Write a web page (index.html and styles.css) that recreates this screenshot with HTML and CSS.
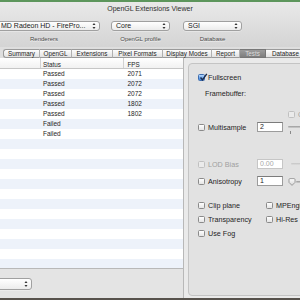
FILE: index.html
```html
<!DOCTYPE html>
<html>
<head>
<meta charset="utf-8">
<title>OpenGL Extensions Viewer</title>
<link rel="stylesheet" href="styles.css">
</head>
<body>
<div class="window">
  <div class="accent"></div>
  <header class="toolbar">
    <div class="title">OpenGL Extensions Viewer</div>
    <div class="pickers">
      <div class="picker renderers">
        <div class="popup"><span>MD Radeon HD - FirePro...</span><svg class="arr" viewBox="0 0 4 8" width="4" height="8"><path d="M0.5 3 L2 1 L3.5 3 Z M0.5 5 L2 7 L3.5 5 Z" fill="#333"/></svg></div>
        <div class="plabel">Renderers</div>
      </div>
      <div class="picker profile">
        <div class="popup"><span>Core</span><svg class="arr" viewBox="0 0 4 8" width="4" height="8"><path d="M0.5 3 L2 1 L3.5 3 Z M0.5 5 L2 7 L3.5 5 Z" fill="#333"/></svg></div>
        <div class="plabel">OpenGL profile</div>
      </div>
      <div class="picker database">
        <div class="popup"><span>SGI</span><svg class="arr" viewBox="0 0 4 8" width="4" height="8"><path d="M0.5 3 L2 1 L3.5 3 Z M0.5 5 L2 7 L3.5 5 Z" fill="#333"/></svg></div>
        <div class="plabel">Database</div>
      </div>
    </div>
  </header>
  <nav class="tabs">
    <div class="tab first t-summary">Summary</div>
    <div class="tab t-opengl">OpenGL</div>
    <div class="tab t-ext">Extensions</div>
    <div class="tab t-pixel">Pixel Formats</div>
    <div class="tab t-display">Display Modes</div>
    <div class="tab t-report">Report</div>
    <div class="tab sel t-tests">Tests</div>
    <div class="tab t-db">Database</div>
  </nav>
  <main class="content">
    <section class="left">
      <div class="table">
        <div class="thead"><div class="c c1"></div><div class="c c2">Status</div><div class="c c3">FPS</div></div>
        <div class="row"><div class="c c1"></div><div class="c c2">Passed</div><div class="c c3">2071</div></div>
        <div class="row"><div class="c c1"></div><div class="c c2">Passed</div><div class="c c3">2072</div></div>
        <div class="row"><div class="c c1"></div><div class="c c2">Passed</div><div class="c c3">2072</div></div>
        <div class="row"><div class="c c1"></div><div class="c c2">Passed</div><div class="c c3">1802</div></div>
        <div class="row"><div class="c c1"></div><div class="c c2">Passed</div><div class="c c3">1802</div></div>
        <div class="row"><div class="c c1"></div><div class="c c2">Failed</div><div class="c c3"></div></div>
        <div class="row"><div class="c c1"></div><div class="c c2">Failed</div><div class="c c3"></div></div>
        <div class="row"></div><div class="row"></div><div class="row"></div><div class="row"></div>
        <div class="row"></div><div class="row"></div><div class="row"></div><div class="row"></div>
        <div class="row"></div><div class="row"></div><div class="row"></div><div class="row"></div>
        <div class="row"></div>
      </div>
      <div class="bottombar">
        <div class="popup small"><span></span><svg class="arr" viewBox="0 0 4 8" width="4" height="8"><path d="M0.5 3 L2 1 L3.5 3 Z M0.5 5 L2 7 L3.5 5 Z" fill="#333"/></svg></div>
      </div>
    </section>
    <section class="right">
      <div class="box">
        <div class="r r-full">
          <span class="cb on"><svg viewBox="0 0 9 9" width="9" height="9"><path d="M1.5 4.5 L3.5 6.8 L7.8 0.8" fill="none" stroke="#1b2b4a" stroke-width="1.4"/></svg></span>
          <span class="lbl">Fullscreen</span>
        </div>
        <div class="r r-fb"><span>Framebuffer:</span></div>
        <div class="r r-opt"><span class="cb dis"></span><span class="lbl dim">C</span></div>
        <div class="r r-ms">
          <span class="cb"></span><span class="lbl wide">Multisample</span>
          <span class="field">2</span>
          <span class="slider ms"><span class="track"></span><span class="tick"></span></span>
        </div>
        <div class="r r-lod">
          <span class="cb dis"></span><span class="lbl wide dim">LOD Bias</span>
          <span class="field dis">0.00</span>
          <span class="slider lod"><span class="track light"></span></span>
        </div>
        <div class="r r-aniso">
          <span class="cb"></span><span class="lbl wide">Anisotropy</span>
          <span class="field">1</span>
          <span class="knobwrap"><svg class="knob" viewBox="0 0 8 8" width="8" height="8"><defs><linearGradient id="kg" x1="0" y1="0" x2="0" y2="1"><stop offset="0" stop-color="#ffffff"/><stop offset="1" stop-color="#d4d4d4"/></linearGradient></defs><path d="M1 1.6 Q1 0.6 2 0.6 H6 Q7 0.6 7 1.6 V4.4 L4 7.4 L1 4.4 Z" fill="url(#kg)" stroke="#8a8a8a" stroke-width="0.8"/></svg><span class="track short"></span></span>
        </div>
        <div class="r r-clip">
          <span class="pair"><span class="cb"></span><span class="lbl">Clip plane</span></span>
          <span class="pair"><span class="cb"></span><span class="lbl">MPEngine</span></span>
        </div>
        <div class="r r-trans">
          <span class="pair"><span class="cb"></span><span class="lbl">Transparency</span></span>
          <span class="pair"><span class="cb"></span><span class="lbl">Hi-Res Import</span></span>
        </div>
        <div class="r r-fog">
          <span class="pair"><span class="cb"></span><span class="lbl">Use Fog</span></span>
        </div>
      </div>
    </section>
  </main>
  <div class="dock"></div>
</div>
</body>
</html>
```

FILE: styles.css
```css
* { box-sizing: border-box; margin: 0; padding: 0; }
html, body { width: 300px; height: 300px; overflow: hidden; }
body {
  font-family: "Liberation Sans", Arial, sans-serif;
  color: #1e1e1e;
  background: #e8e8e8;
}
.window { width: 300px; height: 300px; display: flex; flex-direction: column; overflow: hidden; }
.accent { height: 2px; flex: none; background: #5d965c; }

.toolbar {
  height: 45px; flex: none;
  background: linear-gradient(#e9e9e9, #d4d4d4);
  display: flex; flex-direction: column;
}
.title { font-size: 7px; line-height: 9px; padding-top: 2px; text-align: center; color: #2e2e2e; }
.pickers { display: flex; margin-top: 8px; margin-left: -12px; gap: 11px; }
.picker { display: flex; flex-direction: column; align-items: center; flex: none; }
.renderers { width: 112px; }
.profile, .database { width: 59px; }
.database { margin-left: 2px; }

.popup {
  width: 100%; height: 10px;
  border: 1px solid #a0a0a0; border-radius: 3px;
  background: linear-gradient(#ffffff, #ececec);
  box-shadow: 0 0.5px 0 rgba(255,255,255,0.6);
  display: flex; align-items: center; justify-content: space-between;
  padding: 0 3px 0 4px;
  font-size: 7px; line-height: 8px; color: #1a1a1a;
  white-space: nowrap; overflow: hidden;
}
.renderers .popup { padding-left: 12px; }
.arr { flex: none; }
.plabel { margin-top: 4px; font-size: 6px; line-height: 8px; color: #4a4a4a; text-shadow: 0 0.5px 0 rgba(255,255,255,0.7); }

.tabs {
  height: 11px; flex: none;
  background: #dedede;
  display: flex; padding: 2px 0 0 3px;
}
.tab {
  flex: none; height: 9px;
  border-top: 1px solid #9a9a9a; border-bottom: 1px solid #9a9a9a;
  border-right: 1px solid #b0b0b0;
  background: linear-gradient(#fdfdfd, #e2e2e2);
  font-size: 6.3px; line-height: 7px; text-align: center; color: #1e1e1e;
  white-space: nowrap;
}
.tab.first { border-left: 1px solid #9a9a9a; border-radius: 3px 0 0 3px; }
.tab.sel { background: linear-gradient(#9c9c9c, #7e7e7e); color: #dcdcdc; border-color: #777; }
.t-summary { width: 37px; }
.t-opengl { width: 32px; }
.t-ext { width: 41px; }
.t-pixel { width: 50px; }
.t-display { width: 49px; }
.t-report { width: 28px; }
.t-tests { width: 26px; }
.t-db { width: 40px; }

.content { flex: 1; display: flex; min-height: 0; }
.left { width: 184px; flex: none; display: flex; flex-direction: column; border-right: 1px solid #b8b8b8; }
.table { height: 210px; flex: none; background: #fff; overflow: hidden; }
.thead {
  display: flex; height: 11px;
  background: linear-gradient(#ffffff, #f1f1f1);
  border-bottom: 1px solid #c6c6c6;
  font-size: 6.3px; line-height: 7px;
}
.thead .c { padding-top: 3px; }
.thead .c1, .thead .c2 { border-right: 1px solid #d2d2d2; }
.row { display: flex; align-items: center; height: 10px; font-size: 6.5px; line-height: 8px; }
.row:nth-child(odd) { background: #edf2fa; }
.c { flex: none; white-space: nowrap; }
.c1 { width: 41px; }
.c2 { width: 83px; padding-left: 2px; }
.c3 { flex: 1; padding-left: 3.5px; }

.bottombar { flex: 1; background: #e4e4e4; border-top: 1px solid #b8b8b8; padding-top: 9px; }
.popup.small { width: 40px; height: 12px; margin-left: -8px; padding-right: 3px; }

.right { flex: 1; background: #eaeaea; padding: 5px 0 2px 4px; min-width: 0; }
.box {
  width: 130px; height: 100%;
  border: 1px solid #c4c4c4; border-radius: 4px;
  background: #e2e2e2;
  padding-left: 9px;
}
.r { display: flex; align-items: center; height: 10px; font-size: 7.2px; line-height: 9px; white-space: nowrap; }
.r-full { margin-top: 8px; }
.r-fb { margin-top: 6px; padding-left: 7px; }
.r-opt { margin-top: 11px; padding-left: 90px; }
.r-ms { margin-top: 3px; }
.r-lod { margin-top: 27px; }
.r-aniso { margin-top: 7px; }
.r-clip { margin-top: 14px; }
.r-trans, .r-fog { margin-top: 4px; }

.cb {
  width: 7px; height: 7px; flex: none;
  border: 1px solid #8a8a8a; border-radius: 1.5px;
  background: linear-gradient(#ffffff, #e4e4e4);
  position: relative;
}
.cb.dis { border-color: #c0c0c0; background: #ebebeb; }
.cb.on { background: linear-gradient(#b5d6fb, #3a83e0); border-color: #3d6db0; }
.cb.on svg { position: absolute; left: -0.5px; top: -2px; overflow: visible; }
.lbl { margin-left: 3px; }
.lbl.wide { width: 49px; flex: none; }
.dim { color: #a0a0a0; }
.pair { display: flex; align-items: center; width: 68px; flex: none; }

.field {
  width: 26px; height: 10px; flex: none;
  border: 1px solid #9c9c9c; border-top-color: #7c7c7c;
  background: #fff;
  font-size: 7px; line-height: 8px; padding-left: 2px;
  display: flex; align-items: center;
}
.field.dis { color: #a8a8a8; border-color: #c6c6c6; }

.slider { display: flex; flex-direction: column; flex: none; }
.slider.ms { margin-left: 5px; align-self: flex-start; margin-top: 4px; }
.slider.lod { margin-left: 8px; }
.track { display: block; width: 20px; height: 2px; border-radius: 1px; background: linear-gradient(#9a9a9a, #d0d0d0); }
.track.light { background: linear-gradient(#c4c4c4, #dedede); }
.track.short { width: 12px; }
.tick { display: block; width: 1px; height: 3px; margin-left: 2px; margin-top: 3px; background: #8a8a8a; }
.knobwrap { display: flex; align-items: center; margin-left: 5px; margin-top: 2px; flex: none; }
.knob { flex: none; }

.dock { height: 2px; flex: none; background: #57524c; }
```
